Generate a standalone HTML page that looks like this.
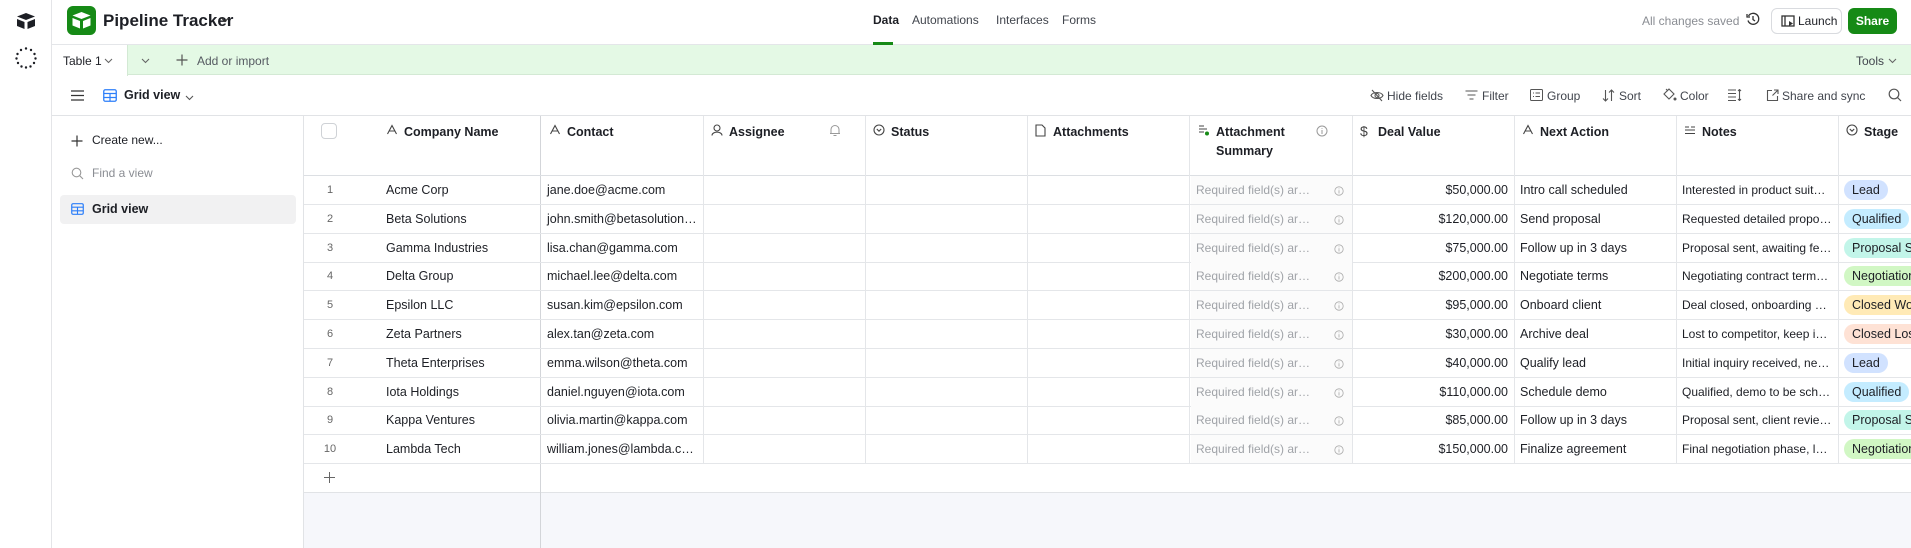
<!DOCTYPE html>
<html><head><meta charset="utf-8">
<style>
*{box-sizing:border-box;margin:0;padding:0}
body{width:1911px;height:548px;overflow:hidden;background:#fff;font-family:"Liberation Sans",Arial,sans-serif;font-size:12.5px;color:#1d1f25;position:relative}
.a{position:absolute;white-space:nowrap}
.ic{position:absolute}
.hd{position:absolute;top:123px;font-weight:bold;font-size:12.5px}
.cell{position:absolute;height:29px;line-height:28px;overflow:hidden;white-space:nowrap;text-overflow:ellipsis;padding:0 6px}
.pill{display:inline-block;height:20px;line-height:20px;border-radius:10px;padding:0 8px;font-size:12.5px;vertical-align:middle}
</style></head><body>

<div class="a" style="left:0;top:0;width:52px;height:548px;border-right:1px solid #e4e5e8;background:#fff"></div>
<svg class="ic" style="left:16px;top:12px" width="20" height="18" viewBox="0 0 20 18"><path d="M10 1 L19 4.5 L10 8 L1 4.5Z" fill="#1d1f25"/><path d="M1 7 L8.5 10 V17 L1 14Z" fill="#1d1f25"/><path d="M11.5 10 L19 7 V14 L11.5 17Z" fill="#1d1f25"/></svg>
<svg class="ic" style="left:14px;top:46px" width="24" height="24" viewBox="0 0 24 24"><g fill="#1d1f25"><circle cx="12" cy="2.5" r="1.2"/><circle cx="17" cy="4" r="1.2"/><circle cx="20.5" cy="8" r="1.2"/><circle cx="21.5" cy="12.5" r="1.2"/><circle cx="20" cy="17" r="1.2"/><circle cx="16.5" cy="20.5" r="1.2"/><circle cx="12" cy="21.5" r="1.2"/><circle cx="7.5" cy="20.5" r="1.2"/><circle cx="4" cy="17" r="1.2"/><circle cx="2.5" cy="12.5" r="1.2"/><circle cx="3.5" cy="8" r="1.2"/><circle cx="7" cy="4" r="1.2"/></g></svg>

<div class="a" style="left:52px;top:44px;width:1859px;height:1px;background:#e4e6e9"></div>
<div class="a" style="left:67px;top:6px;width:29px;height:29px;background:#168a16;border-radius:6px"></div>
<svg class="ic" style="left:71px;top:11px" width="21" height="19" viewBox="0 0 21 19"><path d="M10.5 1 L19.5 4.5 L10.5 8 L1.5 4.5Z" fill="#fff"/><path d="M1.5 7 L9 10 V17.5 L1.5 14.5Z" fill="#fff"/><path d="M12 10 L19.5 7 V14.5 L12 17.5Z" fill="#fff"/></svg>
<div class="a" style="left:103px;top:10px;font-size:17px;font-weight:bold;line-height:21px">Pipeline Tracker</div>
<svg class="ic" style="left:220px;top:16px" width="10" height="7" viewBox="0 0 10 7"><path d="M1 1.5 L5 5.5 L9 1.5" stroke="#333" fill="none" stroke-width="1.2"/></svg>
<div class="a" style="left:873px;top:13px;font-weight:bold;font-size:12px">Data</div>
<div class="a" style="left:873px;top:42px;width:20px;height:3px;background:#168a16"></div>
<div class="a" style="left:912px;top:13px;color:#41454d;font-size:12px">Automations</div>
<div class="a" style="left:996px;top:13px;color:#41454d;font-size:12px">Interfaces</div>
<div class="a" style="left:1062px;top:13px;color:#41454d;font-size:12px">Forms</div>
<div class="a" style="left:1642px;top:14px;color:#8a8d93;font-size:12px">All changes saved</div>
<svg class="ic" style="left:1746px;top:12px" width="14" height="14" viewBox="0 0 14 14"><path d="M2.5 4 A5.5 5.5 0 1 1 2 8.5" stroke="#333" fill="none" stroke-width="1.3"/><path d="M1 2 V5 H4" stroke="#333" fill="none" stroke-width="1.3"/><path d="M7 4 V7.5 L9 9" stroke="#333" fill="none" stroke-width="1.3"/></svg>
<div class="a" style="left:1771px;top:8px;width:71px;height:26px;border:1px solid #d9dbdf;border-radius:6px"></div>
<svg class="ic" style="left:1781px;top:15px" width="14" height="13" viewBox="0 0 14 13"><rect x="1" y="1" width="12" height="10" fill="none" stroke="#333" stroke-width="1.3"/><path d="M4 1 V11" stroke="#333" stroke-width="1.3"/><path d="M8 6 L12 8.5 L8 11Z" fill="#333"/></svg>
<div class="a" style="left:1798px;top:14px;font-size:12px">Launch</div>
<div class="a" style="left:1848px;top:8px;width:49px;height:26px;background:#168a16;border-radius:6px;color:#fff;font-weight:bold;text-align:center;line-height:26px;font-size:12px">Share</div>

<div class="a" style="left:52px;top:45px;width:1859px;height:30px;background:#e4f9e5;border-bottom:1px solid #d3e9d4"></div>
<div class="a" style="left:52px;top:45px;width:76px;height:31px;background:#fff;border-right:1px solid #d3e9d4"></div>
<div class="a" style="left:63px;top:54px;font-size:12px">Table 1</div>
<svg class="ic" style="left:104px;top:58px" width="9" height="6" viewBox="0 0 9 6"><path d="M1 1 L4.5 4.5 L8 1" stroke="#666" fill="none" stroke-width="1.1"/></svg>
<svg class="ic" style="left:141px;top:58px" width="9" height="6" viewBox="0 0 9 6"><path d="M1 1 L4.5 4.5 L8 1" stroke="#666" fill="none" stroke-width="1.1"/></svg>
<svg class="ic" style="left:176px;top:54px" width="12" height="12" viewBox="0 0 12 12"><path d="M6 0.5 V11.5 M0.5 6 H11.5" stroke="#555" stroke-width="1.2"/></svg>
<div class="a" style="left:197px;top:54px;color:#555a61;font-size:12px">Add or import</div>
<div class="a" style="left:1856px;top:54px;color:#41454d;font-size:12px">Tools</div>
<svg class="ic" style="left:1888px;top:58px" width="9" height="6" viewBox="0 0 9 6"><path d="M1 1 L4.5 4.5 L8 1" stroke="#666" fill="none" stroke-width="1.1"/></svg>

<div class="a" style="left:52px;top:115px;width:1859px;height:1px;background:#e1e3e6"></div>
<svg class="ic" style="left:71px;top:90px" width="13" height="11" viewBox="0 0 13 11"><path d="M0 1 H13 M0 5.5 H13 M0 10 H13" stroke="#333" stroke-width="1.2"/></svg>
<svg class="ic" style="left:103px;top:89px" width="14" height="13" viewBox="0 0 14 13"><rect x="0.75" y="0.75" width="12.5" height="11.5" rx="1.5" fill="none" stroke="#2d7ff9" stroke-width="1.3"/><path d="M0.75 4.5 H13.25 M0.75 8.5 H13.25 M7 4.5 V12.25" stroke="#2d7ff9" stroke-width="1.2"/></svg>
<div class="a" style="left:124px;top:88px;font-weight:bold;font-size:12.5px">Grid view</div>
<svg class="ic" style="left:185px;top:95px" width="9" height="6" viewBox="0 0 9 6"><path d="M1 1 L4.5 4.5 L8 1" stroke="#555" fill="none" stroke-width="1.1"/></svg>

<svg class="ic" style="left:1370px;top:89px" width="14" height="13" viewBox="0 0 14 13"><path d="M1 6.5 C3 2.5 11 2.5 13 6.5 C11 10.5 3 10.5 1 6.5Z" fill="none" stroke="#555" stroke-width="1.1"/><circle cx="7" cy="6.5" r="2" fill="none" stroke="#555" stroke-width="1.1"/><path d="M2 1 L12 12" stroke="#555" stroke-width="1.1"/></svg>
<div class="a" style="left:1387px;top:89px;color:#41454d;font-size:12px">Hide fields</div>
<svg class="ic" style="left:1465px;top:90px" width="13" height="10" viewBox="0 0 13 10"><path d="M0.5 1 H12.5 M2.5 5 H10.5 M4.5 9 H8.5" stroke="#555" stroke-width="1.1"/></svg>
<div class="a" style="left:1482px;top:89px;color:#41454d;font-size:12px">Filter</div>
<svg class="ic" style="left:1530px;top:89px" width="13" height="12" viewBox="0 0 13 12"><rect x="0.5" y="0.5" width="12" height="11" rx="1" fill="none" stroke="#555"/><path d="M3 4 H4 M5.5 4 H10 M3 7.5 H4 M5.5 7.5 H10" stroke="#555"/></svg>
<div class="a" style="left:1547px;top:89px;color:#41454d;font-size:12px">Group</div>
<svg class="ic" style="left:1602px;top:89px" width="13" height="13" viewBox="0 0 13 13"><path d="M3.5 1 V12 M1 9.5 L3.5 12 L6 9.5 M9.5 12 V1 M7 3.5 L9.5 1 L12 3.5" stroke="#555" fill="none" stroke-width="1.1"/></svg>
<div class="a" style="left:1619px;top:89px;color:#41454d;font-size:12px">Sort</div>
<svg class="ic" style="left:1662px;top:88px" width="15" height="14" viewBox="0 0 15 14"><path d="M2 6 L7 1 L12 6 L7 11Z" fill="none" stroke="#555" stroke-width="1.1"/><path d="M4 1 L6 3" stroke="#555"/><circle cx="13" cy="11" r="1.5" fill="#555"/></svg>
<div class="a" style="left:1680px;top:89px;color:#41454d;font-size:12px">Color</div>
<svg class="ic" style="left:1728px;top:89px" width="14" height="12" viewBox="0 0 14 12"><path d="M0 1 H8 M0 4.5 H8 M0 8 H8 M0 11.5 H8 M11.5 0.5 V11.5 M10 2 L11.5 0.5 L13 2 M10 10 L11.5 11.5 L13 10" stroke="#555" fill="none" stroke-width="1.1"/></svg>
<svg class="ic" style="left:1766px;top:89px" width="13" height="13" viewBox="0 0 13 13"><path d="M6 1.5 H1.5 V11.5 H11.5 V7" stroke="#555" fill="none" stroke-width="1.1"/><path d="M8 1 H12 V5 M12 1 L6.5 6.5" stroke="#555" fill="none" stroke-width="1.1"/></svg>
<div class="a" style="left:1782px;top:89px;color:#41454d;font-size:12px">Share and sync</div>
<svg class="ic" style="left:1888px;top:88px" width="14" height="14" viewBox="0 0 14 14"><circle cx="6" cy="6" r="4.8" fill="none" stroke="#555" stroke-width="1.2"/><path d="M9.5 9.5 L13 13" stroke="#555" stroke-width="1.2"/></svg>

<div class="a" style="left:303px;top:116px;width:1px;height:432px;background:#e1e3e6"></div>
<svg class="ic" style="left:71px;top:135px" width="12" height="12" viewBox="0 0 12 12"><path d="M6 0.5 V11.5 M0.5 6 H11.5" stroke="#333" stroke-width="1.2"/></svg>
<div class="a" style="left:92px;top:133px;font-size:12px">Create new...</div>
<svg class="ic" style="left:71px;top:167px" width="13" height="13" viewBox="0 0 13 13"><circle cx="5.5" cy="5.5" r="4.3" fill="none" stroke="#999" stroke-width="1.1"/><path d="M8.7 8.7 L12 12" stroke="#999" stroke-width="1.1"/></svg>
<div class="a" style="left:92px;top:166px;color:#8a8d93;font-size:12px">Find a view</div>
<div class="a" style="left:60px;top:195px;width:236px;height:29px;background:#f1f1f2;border-radius:4px"></div>
<svg class="ic" style="left:71px;top:203px" width="13" height="12" viewBox="0 0 14 13"><rect x="0.75" y="0.75" width="12.5" height="11.5" rx="1.5" fill="none" stroke="#2d7ff9" stroke-width="1.3"/><path d="M0.75 4.5 H13.25 M0.75 8.5 H13.25 M7 4.5 V12.25" stroke="#2d7ff9" stroke-width="1.2"/></svg>
<div class="a" style="left:92px;top:202px;font-weight:bold;font-size:12.5px">Grid view</div>

<div class="a" style="left:304px;top:493px;width:1607px;height:55px;background:#f6f7fb"></div>
<div class="a" style="left:304px;top:492px;width:1607px;height:1px;background:#e1e3e6"></div>
<div class="a" style="left:540px;top:116px;width:1px;height:432px;background:#d3d5d9"></div>
<svg class="ic" style="left:324px;top:472px" width="11" height="11" viewBox="0 0 11 11"><path d="M5.5 0 V11 M0 5.5 H11" stroke="#666" stroke-width="1"/></svg>

<div class="a" style="left:304px;top:175px;width:1607px;height:1px;background:#dcdfe3"></div>
<div class="a" style="left:321px;top:123px;width:16px;height:16px;border:1px solid #cfd2d6;border-radius:4px"></div>
<div id="hdrs"></div>
<div id="rows"></div>

<script>
var cols=[541,703,865,1027,1190,1352,1514,1676,1838];
var H='';
for(var i=0;i<cols.length-1;i++){H+='<div class="a" style="left:'+(cols[i]+162)+'px;top:116px;width:1px;height:348px;background:#e4e6e9"></div>';}
var A='<svg width="12" height="11" viewBox="0 0 12 11"><path d="M1.5 10 L6 1.5 L10.5 10 M3.2 7 H8.8" stroke="#444" fill="none" stroke-width="1.1"/></svg>';
var hs=[[386,A,'Company Name'],[549,A,'Contact'],[711,'<svg width="12" height="12" viewBox="0 0 12 12"><circle cx="6" cy="4" r="3" fill="none" stroke="#444" stroke-width="1.1"/><path d="M1 11.5 C1 7 11 7 11 11.5" fill="none" stroke="#444" stroke-width="1.1"/></svg>','Assignee'],
[873,'<svg width="12" height="12" viewBox="0 0 12 12"><circle cx="6" cy="6" r="5" fill="none" stroke="#444" stroke-width="1.1"/><path d="M3.8 5 L6 7.2 L8.2 5" fill="none" stroke="#444" stroke-width="1.1"/></svg>','Status'],
[1035,'<svg width="11" height="13" viewBox="0 0 11 13"><path d="M1 1 H7 L10 4 V12 H1Z" fill="none" stroke="#444" stroke-width="1.1"/></svg>','Attachments'],
[1198,'<svg width="12" height="12" viewBox="0 0 12 12"><path d="M1 2 H6 M1 5 H9 M1 8 H6" stroke="#444" stroke-width="1"/><circle cx="9" cy="9.5" r="2" fill="#168a16"/></svg>','Attachment<br>Summary'],
[1360,'<span style="font-size:14px;color:#444;font-weight:normal">$</span>','Deal Value'],[1522,A,'Next Action'],
[1684,'<svg width="12" height="10" viewBox="0 0 12 10"><path d="M1 2 H5 M1 5 H11 M1 8.5 H11 M7 2 H11" stroke="#444" stroke-width="1"/></svg>','Notes'],
[1846,'<svg width="12" height="12" viewBox="0 0 12 12"><circle cx="6" cy="6" r="5" fill="none" stroke="#444" stroke-width="1.1"/><path d="M3.8 5 L6 7.2 L8.2 5" fill="none" stroke="#444" stroke-width="1.1"/></svg>','Stage']];
for(var i=0;i<hs.length;i++){var h=hs[i];
H+='<div class="a" style="left:'+h[0]+'px;top:124px;width:14px;height:14px;line-height:14px">'+h[1]+'</div>';
H+='<div class="hd" style="left:'+(h[0]+18)+'px;line-height:19px">'+h[2]+'</div>';}
H+='<svg class="ic" style="left:829px;top:124px" width="12" height="13" viewBox="0 0 12 13"><path d="M2 9.5 V5.5 A4 4 0 0 1 10 5.5 V9.5 H1 H11 M4.5 11.5 H7.5" fill="none" stroke="#999" stroke-width="1"/></svg>';
H+='<svg class="ic" style="left:1316px;top:125px" width="12" height="12" viewBox="0 0 12 12"><circle cx="6" cy="6" r="5" fill="none" stroke="#999"/><path d="M6 5 V9 M6 3 V3.8" stroke="#999"/></svg>';
document.getElementById('hdrs').innerHTML=H;
var d=[["Acme Corp","jane.doe@acme.com","$50,000.00","Intro call scheduled","Interested in product suite,...","Lead"],
["Beta Solutions","john.smith@betasolutions....","$120,000.00","Send proposal","Requested detailed propos...","Qualified"],
["Gamma Industries","lisa.chan@gamma.com","$75,000.00","Follow up in 3 days","Proposal sent, awaiting fee...","Proposal Sent"],
["Delta Group","michael.lee@delta.com","$200,000.00","Negotiate terms","Negotiating contract terms...","Negotiation"],
["Epsilon LLC","susan.kim@epsilon.com","$95,000.00","Onboard client","Deal closed, onboarding sc...","Closed Won"],
["Zeta Partners","alex.tan@zeta.com","$30,000.00","Archive deal","Lost to competitor, keep in...","Closed Lost"],
["Theta Enterprises","emma.wilson@theta.com","$40,000.00","Qualify lead","Initial inquiry received, nee...","Lead"],
["Iota Holdings","daniel.nguyen@iota.com","$110,000.00","Schedule demo","Qualified, demo to be sche...","Qualified"],
["Kappa Ventures","olivia.martin@kappa.com","$85,000.00","Follow up in 3 days","Proposal sent, client review...","Proposal Sent"],
["Lambda Tech","william.jones@lambda.com","$150,000.00","Finalize agreement","Final negotiation phase, le...","Negotiation"]];
var pc={"Lead":"#d1e2ff","Qualified":"#c4ecff","Proposal Sent":"#c2f5e9","Negotiation":"#d1f7c4","Closed Won":"#ffeab6","Closed Lost":"#fee2d5"};
var R='';
for(var r=0;r<10;r++){var y=176+r*28.8;var x=d[r];
R+='<div class="a" style="left:304px;top:'+(y+28)+'px;width:1607px;height:1px;background:#e4e6e9"></div>';
R+='<div class="a" style="left:1191px;top:'+y+'px;width:161px;height:28px;background:#fbfbfb"></div>';
R+='<div class="cell" style="left:304px;top:'+y+'px;width:52px;text-align:center;font-size:11px;color:#666;padding:0">'+(r+1)+'</div>';
R+='<div class="cell" style="left:380px;top:'+y+'px;width:160px">'+x[0]+'</div>';
R+='<div class="cell" style="left:541px;top:'+y+'px;width:162px">'+x[1]+'</div>';
R+='<div class="cell" style="left:1190px;top:'+y+'px;width:130px;color:#a0a3a8;font-size:12px">Required field(s) are...</div>';
R+='<svg class="ic" style="left:1334px;top:'+(y+10)+'px" width="10" height="10" viewBox="0 0 10 10"><circle cx="5" cy="5" r="4.2" fill="none" stroke="#aaa" stroke-width="0.8"/><path d="M5 4.2 V7.5 M5 2.5 V3.2" stroke="#aaa" stroke-width="0.8"/></svg>';
R+='<div class="cell" style="left:1352px;top:'+y+'px;width:162px;text-align:right">'+x[2]+'</div>';
R+='<div class="cell" style="left:1514px;top:'+y+'px;width:162px">'+x[3]+'</div>';
R+='<div class="cell" style="left:1676px;top:'+y+'px;width:162px;font-size:12px">'+x[4]+'</div>';
R+='<div class="a" style="left:1844px;top:'+(y+4)+'px"><span class="pill" style="background:'+pc[x[5]]+'">'+x[5]+'</span></div>';}
document.getElementById('rows').innerHTML=R;
</script>
</body></html>
